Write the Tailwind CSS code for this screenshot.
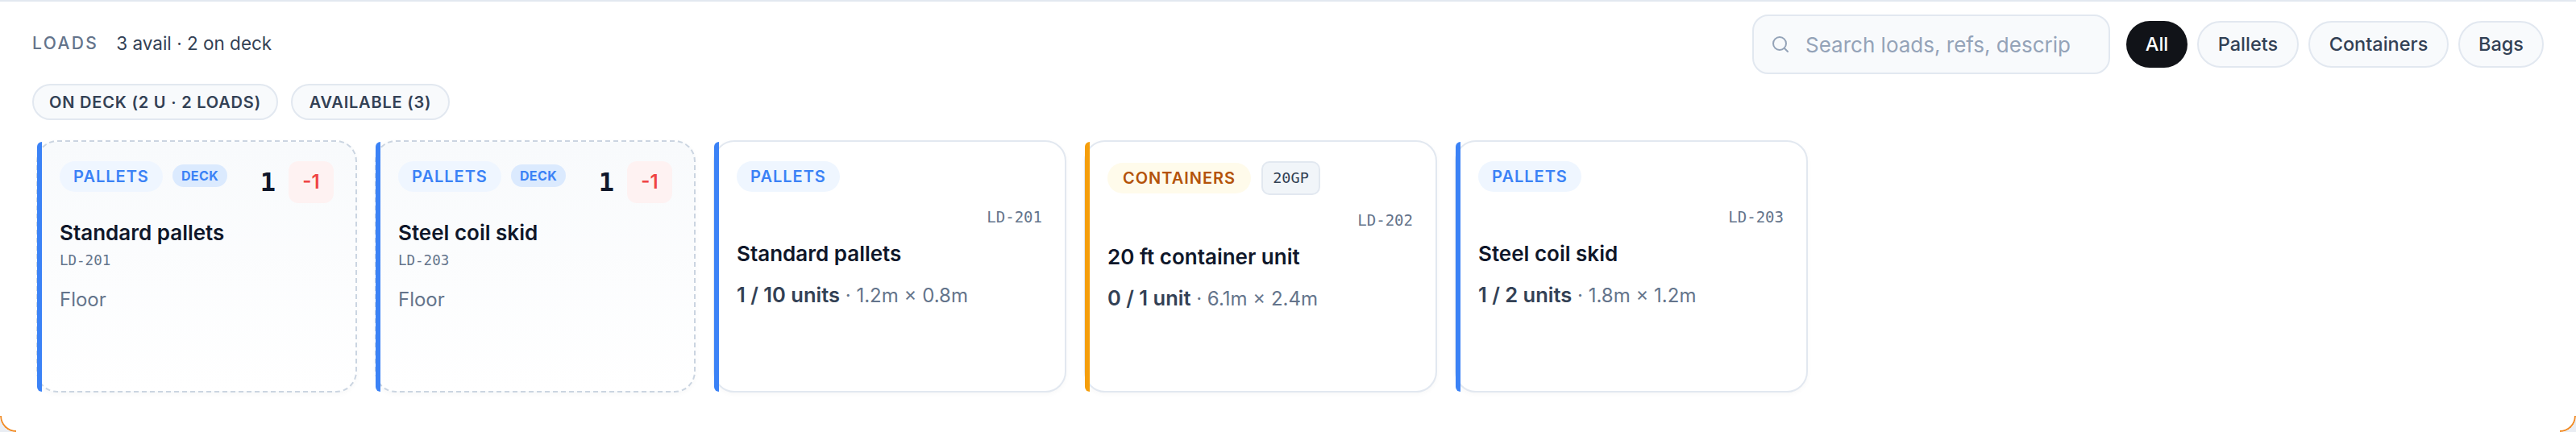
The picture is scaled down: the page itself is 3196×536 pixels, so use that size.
<!DOCTYPE html>
<html>
<head>
<meta charset="utf-8">
<script src="https://cdn.jsdelivr.net/npm/@tailwindcss/browser@4"></script>
</head>
<body class="m-0 bg-[#e9edf3]">
<main class="relative h-[536px] w-[3196px] overflow-hidden rounded-b-[20px] border-t-[2px] border-[#e2e8f0] bg-white font-['Inter',sans-serif]">
  <span class="absolute bottom-0 left-0 h-[20px] w-[20px] rounded-bl-[20px] border-b-[2px] border-l-[2px] border-[#f08a24]"></span>
  <span class="absolute bottom-0 right-0 h-[20px] w-[20px] rounded-br-[20px] border-b-[2px] border-r-[2px] border-[#f08a24]"></span>
  <div class="flex flex-col px-[40px] pt-[16px]">
    <header class="flex h-[74px] items-center justify-between">
      <div class="flex items-center gap-[22px] pb-[2px]">
        <span class="text-[21px] font-medium tracking-[2.4px] text-[#64748b]">LOADS</span>
        <span class="text-[22.5px] font-normal text-[#334155]">3 avail · 2 on deck</span>
      </div>
      <div class="flex items-center gap-[20px]">
        <label class="flex h-[74px] w-[444px] items-center gap-[19px] rounded-[20px] border-[2px] border-[#e2e8f0] bg-[#f8fafc] pl-[21px]">
          <svg class="h-[24px] w-[24px] text-[#94a3b8]" viewBox="0 0 24 24" fill="none" stroke="currentColor" stroke-width="2" stroke-linecap="round"><circle cx="11" cy="11" r="8"/><path d="m21 21-4.3-4.3"/></svg>
          <span class="text-[26px] text-[#94a3b8]">Search loads, refs, descrip</span>
        </label>
        <div class="flex items-center gap-[12px]">
          <span class="flex h-[58px] w-[76px] items-center justify-center rounded-full bg-[#111318] text-[23.5px] font-medium text-white">All</span>
          <span class="flex h-[58px] w-[126px] items-center justify-center rounded-full border-[2px] border-[#e2e8f0] bg-[#f8fafc] text-[23.5px] font-medium text-[#334155]">Pallets</span>
          <span class="flex h-[58px] w-[174px] items-center justify-center rounded-full border-[2px] border-[#e2e8f0] bg-[#f8fafc] text-[23.5px] font-medium text-[#334155]">Containers</span>
          <span class="flex h-[58px] w-[106px] items-center justify-center rounded-full border-[2px] border-[#e2e8f0] bg-[#f8fafc] text-[23.5px] font-medium text-[#334155]">Bags</span>
        </div>
      </div>
    </header>
    <div class="mt-[12px] flex gap-[16px]">
      <span class="flex h-[45px] w-[305px] items-center justify-center rounded-full border-[2px] border-[#e2e8f0] bg-[#f8fafc] text-[20px] font-semibold tracking-[0.8px] text-[#334155]">ON DECK (2 U · 2 LOADS)</span>
      <span class="flex h-[45px] w-[197px] items-center justify-center rounded-full border-[2px] border-[#e2e8f0] bg-[#f8fafc] text-[20px] font-semibold tracking-[0.8px] text-[#334155]">AVAILABLE (3)</span>
    </div>
    <div class="mt-[25px] flex gap-[22px] pl-[5px]">
      <article class="relative h-[313px] w-[398px] rounded-[26px] border-[2px] border-dashed border-[#cbd5e1] bg-gradient-to-b from-[#f8fafc] to-white px-[27px] pt-[24px] [box-shadow:0_2px_6px_rgba(15,23,42,0.03)]">
        <span class="absolute bottom-[-1px] left-[-1px] top-[0px] w-[6px] rounded-l-[6px] bg-[#3b82f6]"></span>
        <div class="flex h-[52px] items-start justify-between">
          <div class="flex items-start gap-[12px]">
            <span class="flex h-[38px] w-[128px] items-center justify-center rounded-full bg-[#eff6ff] text-[20px] font-semibold tracking-[1px] text-[#3b82f6]">PALLETS</span>
            <span class="mt-[4px] flex h-[28px] w-[68px] items-center justify-center rounded-full bg-[#dbeafe] text-[16px] font-bold tracking-[0.4px] text-[#3b82f6]">DECK</span>
          </div>
          <div class="flex items-center gap-[16px]">
            <span class="font-['DejaVu_Sans_Mono',monospace] text-[32px] font-bold leading-none text-[#0f172a]">1</span>
            <span class="flex h-[52px] w-[56px] items-center justify-center rounded-[12px] bg-[#fef2f2] text-[24px] font-semibold text-[#ef4444]">-1</span>
          </div>
        </div>
        <h3 class="mt-[21px] text-[26px] font-semibold leading-[32px] text-[#0f172a]">Standard pallets</h3>
        <p class="mt-[6px] font-['DejaVu_Sans_Mono',monospace] text-[17.5px] leading-[24px] text-[#64748b]">LD-201</p>
        <p class="mt-[22px] text-[24px] leading-[30px] text-[#64748b]">Floor</p>
      </article>
      <article class="relative h-[313px] w-[398px] rounded-[26px] border-[2px] border-dashed border-[#cbd5e1] bg-gradient-to-b from-[#f8fafc] to-white px-[27px] pt-[24px] [box-shadow:0_2px_6px_rgba(15,23,42,0.03)]">
        <span class="absolute bottom-[-1px] left-[-1px] top-[0px] w-[6px] rounded-l-[6px] bg-[#3b82f6]"></span>
        <div class="flex h-[52px] items-start justify-between">
          <div class="flex items-start gap-[12px]">
            <span class="flex h-[38px] w-[128px] items-center justify-center rounded-full bg-[#eff6ff] text-[20px] font-semibold tracking-[1px] text-[#3b82f6]">PALLETS</span>
            <span class="mt-[4px] flex h-[28px] w-[68px] items-center justify-center rounded-full bg-[#dbeafe] text-[16px] font-bold tracking-[0.4px] text-[#3b82f6]">DECK</span>
          </div>
          <div class="flex items-center gap-[16px]">
            <span class="font-['DejaVu_Sans_Mono',monospace] text-[32px] font-bold leading-none text-[#0f172a]">1</span>
            <span class="flex h-[52px] w-[56px] items-center justify-center rounded-[12px] bg-[#fef2f2] text-[24px] font-semibold text-[#ef4444]">-1</span>
          </div>
        </div>
        <h3 class="mt-[21px] text-[26px] font-semibold leading-[32px] text-[#0f172a]">Steel coil skid</h3>
        <p class="mt-[6px] font-['DejaVu_Sans_Mono',monospace] text-[17.5px] leading-[24px] text-[#64748b]">LD-203</p>
        <p class="mt-[22px] text-[24px] leading-[30px] text-[#64748b]">Floor</p>
      </article>
      <article class="relative h-[313px] w-[438px] rounded-[26px] border-[2px] border-[#e2e8f0] bg-white px-[27px] pt-[24px] [box-shadow:0_2px_6px_rgba(15,23,42,0.03)]">
        <span class="absolute bottom-[-1px] left-[-1px] top-[0px] w-[6px] rounded-l-[6px] bg-[#3b82f6]"></span>
        <div class="flex h-[38px] items-start">
          <span class="flex h-[38px] w-[128px] items-center justify-center rounded-full bg-[#eff6ff] text-[20px] font-semibold tracking-[1px] text-[#3b82f6]">PALLETS</span>
        </div>
        <p class="mt-[19px] pr-[1px] text-right font-['DejaVu_Sans_Mono',monospace] text-[19px] leading-[24px] text-[#64748b]">LD-201</p>
        <h3 class="mt-[18px] text-[26px] font-semibold leading-[32px] text-[#0f172a]">Standard pallets</h3>
        <p class="mt-[20px] text-[24px] leading-[30px] text-[#64748b]"><span class="text-[25.5px] font-semibold text-[#334155]">1 / 10 units</span> · 1.2m × 0.8m</p>
      </article>
      <article class="relative h-[313px] w-[438px] rounded-[26px] border-[2px] border-[#e2e8f0] bg-white px-[27px] pt-[24px] [box-shadow:0_2px_6px_rgba(15,23,42,0.03)]">
        <span class="absolute bottom-[-1px] left-[-1px] top-[0px] w-[6px] rounded-l-[6px] bg-[#f59e0b]"></span>
        <div class="flex h-[42px] items-center gap-[13px]">
          <span class="flex h-[38px] w-[178px] items-center justify-center rounded-full bg-[#fffbeb] text-[20px] font-semibold tracking-[1px] text-[#b45309]">CONTAINERS</span>
          <span class="flex h-[42px] w-[73px] items-center justify-center rounded-[10px] border-[2px] border-[#e2e8f0] bg-[#f1f5f9] font-['DejaVu_Sans_Mono',monospace] text-[18.5px] text-[#334155]">20GP</span>
        </div>
        <p class="mt-[19px] pr-[1px] text-right font-['DejaVu_Sans_Mono',monospace] text-[19px] leading-[24px] text-[#64748b]">LD-202</p>
        <h3 class="mt-[18px] text-[26px] font-semibold leading-[32px] text-[#0f172a]">20 ft container unit</h3>
        <p class="mt-[20px] text-[24px] leading-[30px] text-[#64748b]"><span class="text-[25.5px] font-semibold text-[#334155]">0 / 1 unit</span> · 6.1m × 2.4m</p>
      </article>
      <article class="relative h-[313px] w-[438px] rounded-[26px] border-[2px] border-[#e2e8f0] bg-white px-[27px] pt-[24px] [box-shadow:0_2px_6px_rgba(15,23,42,0.03)]">
        <span class="absolute bottom-[-1px] left-[-1px] top-[0px] w-[6px] rounded-l-[6px] bg-[#3b82f6]"></span>
        <div class="flex h-[38px] items-start">
          <span class="flex h-[38px] w-[128px] items-center justify-center rounded-full bg-[#eff6ff] text-[20px] font-semibold tracking-[1px] text-[#3b82f6]">PALLETS</span>
        </div>
        <p class="mt-[19px] pr-[1px] text-right font-['DejaVu_Sans_Mono',monospace] text-[19px] leading-[24px] text-[#64748b]">LD-203</p>
        <h3 class="mt-[18px] text-[26px] font-semibold leading-[32px] text-[#0f172a]">Steel coil skid</h3>
        <p class="mt-[20px] text-[24px] leading-[30px] text-[#64748b]"><span class="text-[25.5px] font-semibold text-[#334155]">1 / 2 units</span> · 1.8m × 1.2m</p>
      </article>
    </div>
  </div>
</main>
</body>
</html>
